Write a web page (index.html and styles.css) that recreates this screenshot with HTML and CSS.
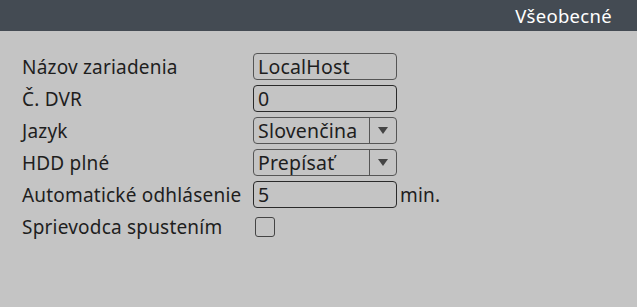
FILE: index.html
```html
<!DOCTYPE html>
<html lang="sk">
<head>
<meta charset="utf-8">
<link rel="stylesheet" href="styles.css">
</head>
<body>
<div class="page">
  <header class="titlebar"><span class="title">Všeobecné</span></header>
  <main class="form">
    <div class="label">Názov zariadenia</div>
    <div class="ctrl"><div class="field light">LocalHost</div></div>

    <div class="label">Č. DVR</div>
    <div class="ctrl"><div class="field">0</div></div>

    <div class="label">Jazyk</div>
    <div class="ctrl"><div class="field select"><span class="val">Slovenčina</span><span class="arrow"></span></div></div>

    <div class="label">HDD plné</div>
    <div class="ctrl"><div class="field select"><span class="val">Prepísať</span><span class="arrow"></span></div></div>

    <div class="label">Automatické odhlásenie</div>
    <div class="ctrl"><div class="field">5</div><span class="unit">min.</span></div>

    <div class="label">Sprievodca spustením</div>
    <div class="ctrl"><div class="check"></div></div>
  </main>
</div>
</body>
</html>
```
FILE: styles.css
```css
html, body {
  margin: 0;
  padding: 0;
}
body {
  width: 637px;
  height: 307px;
  background: #c4c4c4;
  font-family: "Noto Sans", "DejaVu Sans", sans-serif;
  font-size: 19px;
  letter-spacing: 0.2px;
  color: #1e1e1e;
  overflow: hidden;
}
.titlebar {
  height: 31px;
  background: #444b53;
  display: flex;
  align-items: center;
  justify-content: flex-end;
  padding-right: 25px;
}
.title {
  color: #ffffff;
  font-size: 18.5px;
  letter-spacing: 0.3px;
}
.form {
  display: grid;
  grid-template-columns: 231px auto;
  grid-auto-rows: 27px;
  row-gap: 5px;
  padding: 22px 0 0 22px;
}
.label {
  display: flex;
  align-items: center;
  white-space: nowrap;
}
.ctrl {
  display: flex;
  align-items: center;
}
.field {
  box-sizing: border-box;
  width: 144px;
  height: 27px;
  border: 1px solid #2a2a2a;
  border-radius: 4px;
  display: flex;
  align-items: center;
  padding-left: 4px;
  font-size: 19.5px;
  letter-spacing: 0.2px;
}
.field.light {
  border-color: #555;
}
.field.select {
  border-color: #555;
  padding-left: 0;
}
.select .val {
  flex: 1;
  padding-left: 4px;
  height: 100%;
  display: flex;
  align-items: center;
  border-right: 1px solid #555;
}
.select .arrow {
  width: 26px;
  display: flex;
  justify-content: center;
}
.select .arrow::before {
  content: "";
  border-left: 5px solid transparent;
  border-right: 5px solid transparent;
  border-top: 7px solid #444;
}
.unit {
  margin-left: 3px;
}
.check {
  box-sizing: border-box;
  width: 20px;
  height: 20px;
  border: 1px solid #444;
  border-radius: 3px;
  margin-left: 2px;
}
```
